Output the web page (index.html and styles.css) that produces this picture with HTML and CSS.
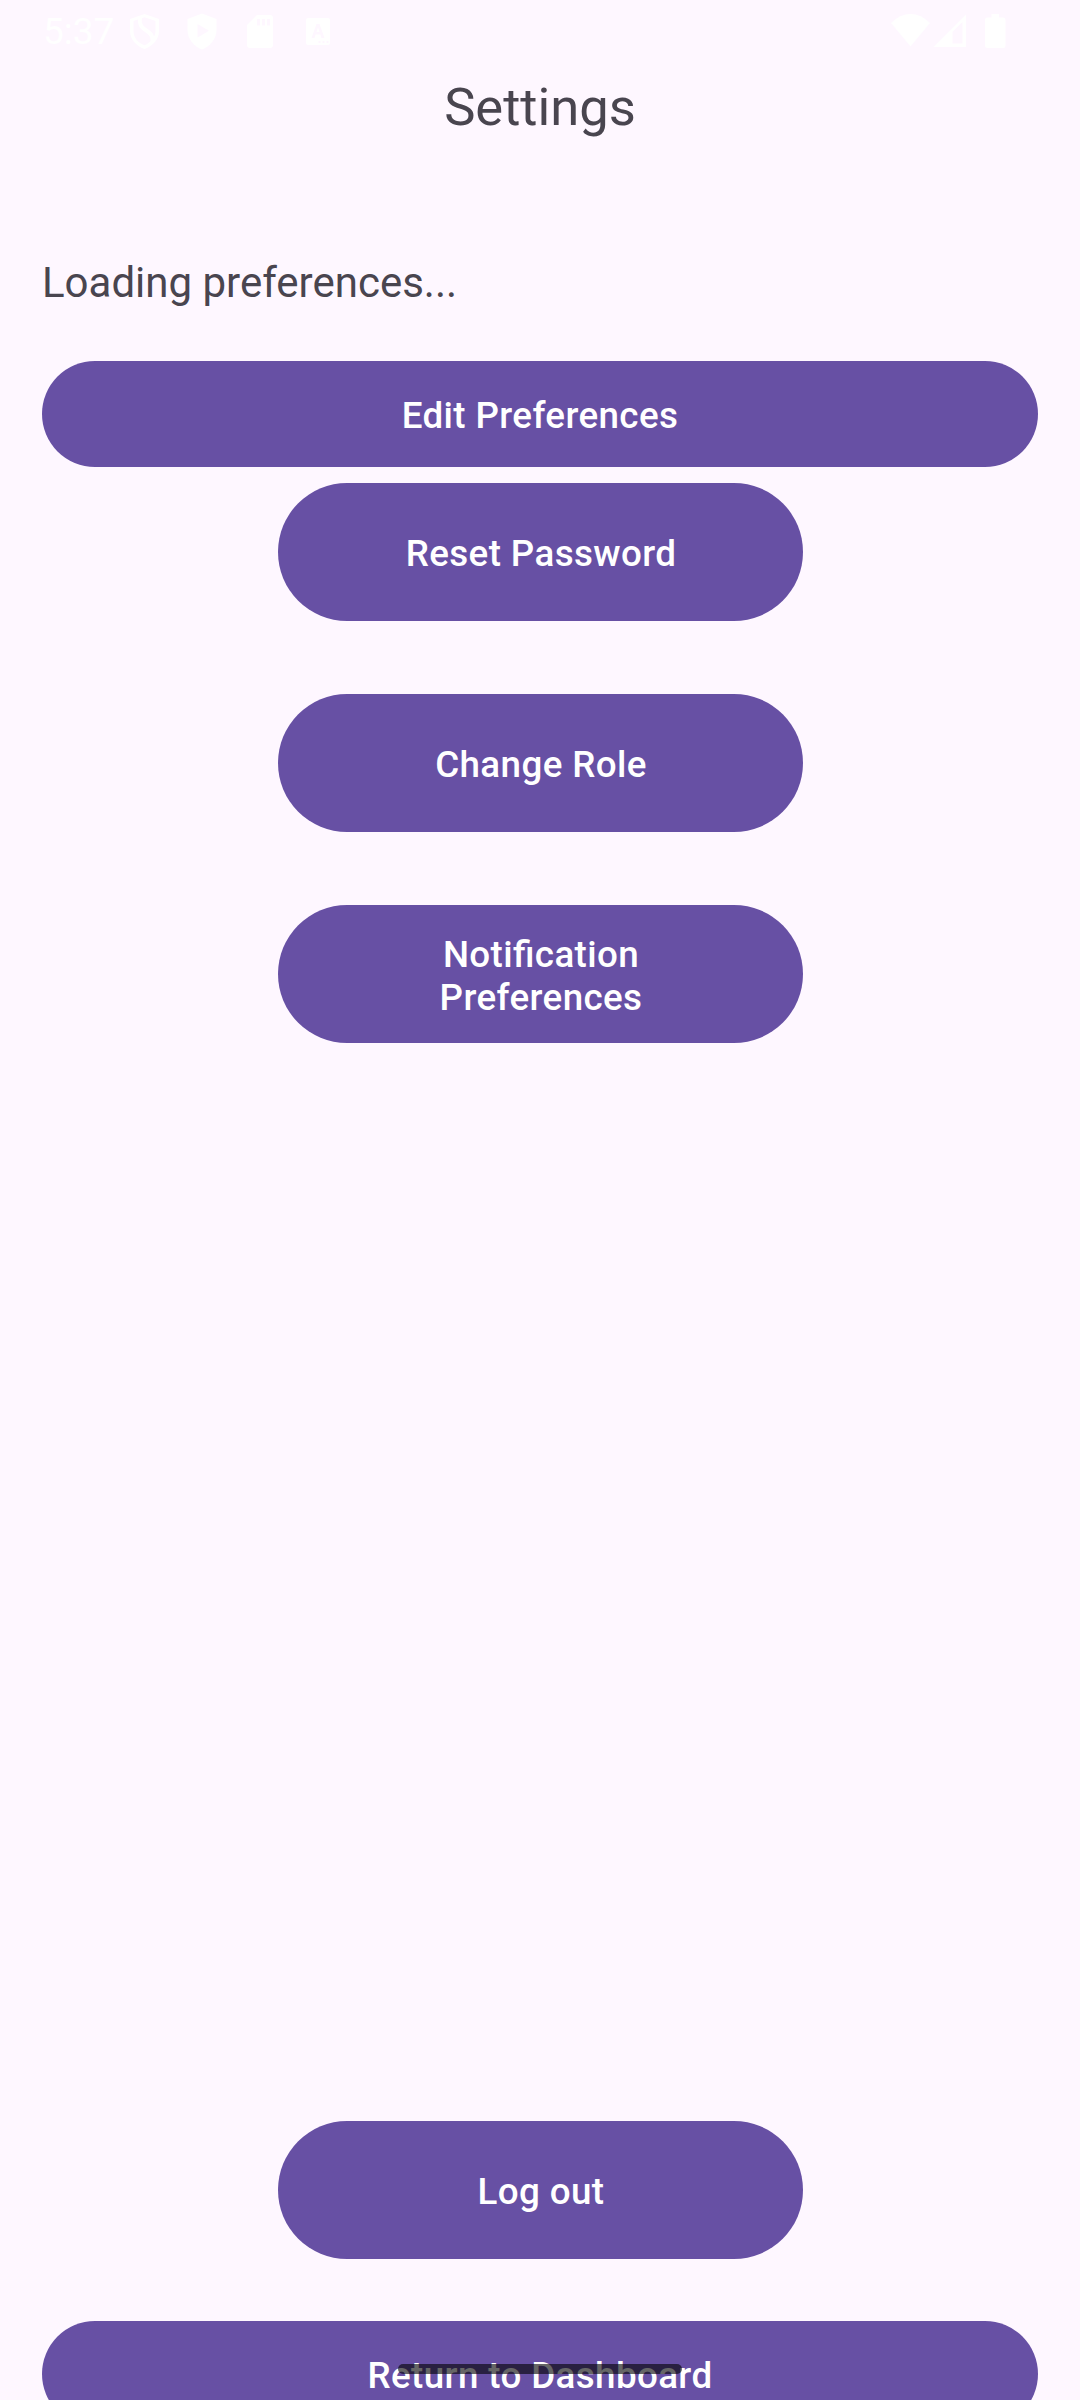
FILE: index.html
```html
<!DOCTYPE html>
<html lang="en">
<head>
<meta charset="utf-8">
<title>Settings</title>
<link rel="stylesheet" href="styles.css">
</head>
<body>
<div class="screen">
  <header class="status">
    <span class="clock">5:37</span>
    <svg class="status-icons" viewBox="120 0 220 64" width="220" height="64" fill="#fff">
      <path fill-rule="evenodd" d="M144.500 14L159 19V31C159 39 153 46 144.500 49C136 46 130 39 130 31V19ZM138 19.500L133.500 21V31C133.500 37.500 138 43 144.500 45.200C147 44.300 149 43 150.500 41C151 37 149 34.500 145 32C140 29 137.500 25 138 19.500ZM142 18.200C141 23 143 26 147 28.500C151 31 153.500 33.500 154 36.500C155 34.800 155.500 33 155.500 31V21L144.500 17.300Z"/>
      <path fill-rule="evenodd" d="M202 13.500L216.500 19V30C216.500 39 210 46.500 202 49.500C194 46.500 187.500 39 187.500 30V19ZM197.500 24V37.500L209 30.700Z"/>
      <path fill-rule="evenodd" d="M257 15H270Q273 15 273 18V45Q273 48 270 48H250Q247 48 247 45V25ZM257 19V25.500H260V19ZM262 19V25.500H265V19ZM267 19V25.500H270V19Z"/>
      <path fill-rule="evenodd" d="M308 18H328Q330 18 330 20V43Q330 45 328 45H308Q306 45 306 43V20Q306 18 308 18ZM316.500 24L311.500 38H314.500L315.600 34.500H320.400L321.500 38H324.500L319.500 24ZM318 27.500L319.600 32H316.400ZM318.500 41V43H320.500V41ZM322.500 41V43H324.500V41ZM326.500 41V43H328.500V41Z"/>
    </svg>
    <svg class="system-icons" viewBox="886 0 124 64" width="124" height="64" fill="#fff">
      <path d="M891 23Q900 14 910.500 14T930 23L910.500 46.500Z"/>
      <path fill-rule="evenodd" d="M966 14.500V47H933.500ZM962.500 22L952.500 32V43.500H962.500Z"/>
      <path d="M991.500 14H999V17.500H1003Q1005.500 17.500 1005.500 20V45.500Q1005.500 48 1003 48H987.500Q985 48 985 45.500V20Q985 17.500 987.500 17.500H991.500Z"/>
    </svg>
  </header>
  <h1 class="title">Settings</h1>
  <p class="message">Loading preferences...</p>
  <main class="actions">
    <button class="button wide">Edit Preferences</button>
    <div class="options">
      <button class="button">Reset Password</button>
      <button class="button">Change Role</button>
      <button class="button">Notification Preferences</button>
    </div>
    <button class="button logout">Log out</button>
    <button class="button wide return">Return to Dashboard</button>
  </main>
  <div class="gesture-bar"></div>
</div>
</body>
</html>
```
FILE: styles.css
```css
* {
  box-sizing: border-box;
}

body {
  margin: 0;
  background: #fef7ff;
  color: #49454f;
  font-family: Roboto, sans-serif;
}

.screen {
  position: relative;
  display: flex;
  flex-direction: column;
  height: 2400px;
  overflow: hidden;
}

.status {
  display: flex;
  flex: none;
  height: 64px;
  padding: 0 70px 0 43px;
  color: #fff;
}

.clock {
  width: 77px;
  padding-top: 10px;
  font-size: 37px;
  line-height: 43px;
}

.system-icons {
  margin-left: auto;
}

.title {
  flex: none;
  height: 62px;
  margin: 12px 0 0;
  font-size: 52.5px;
  font-weight: 400;
  line-height: 62px;
  text-align: center;
}

.message {
  flex: none;
  height: 50px;
  margin: 120px 42px 0;
  font-size: 42px;
  line-height: 50px;
}

.actions {
  display: flex;
  flex: none;
  flex-direction: column;
  align-items: center;
  margin-top: 53px;
  padding: 0 42px;
}

.options {
  display: flex;
  flex-direction: column;
  gap: 73px;
  margin-top: 16px;
}

.button {
  flex: none;
  width: 525px;
  height: 138px;
  padding: 3px 62px 0 64px;
  border: 0;
  border-radius: 69px;
  background: #6750a4;
  color: #fff;
  font-family: inherit;
  font-size: 36.75px;
  font-weight: 500;
  font-feature-settings: "liga" 1;
  letter-spacing: 0.0105em;
  line-height: 43px;
}

.wide {
  width: 100%;
  height: 106px;
  padding: 3px 63px 0;
  border-radius: 53px;
}

.logout {
  margin-top: 1078px;
}

.return {
  margin-top: 62px;
}

.gesture-bar {
  position: absolute;
  bottom: 26px;
  left: 398px;
  width: 284px;
  height: 10px;
  border-radius: 5px;
  background: rgba(0, 0, 0, 0.6);
}
```
